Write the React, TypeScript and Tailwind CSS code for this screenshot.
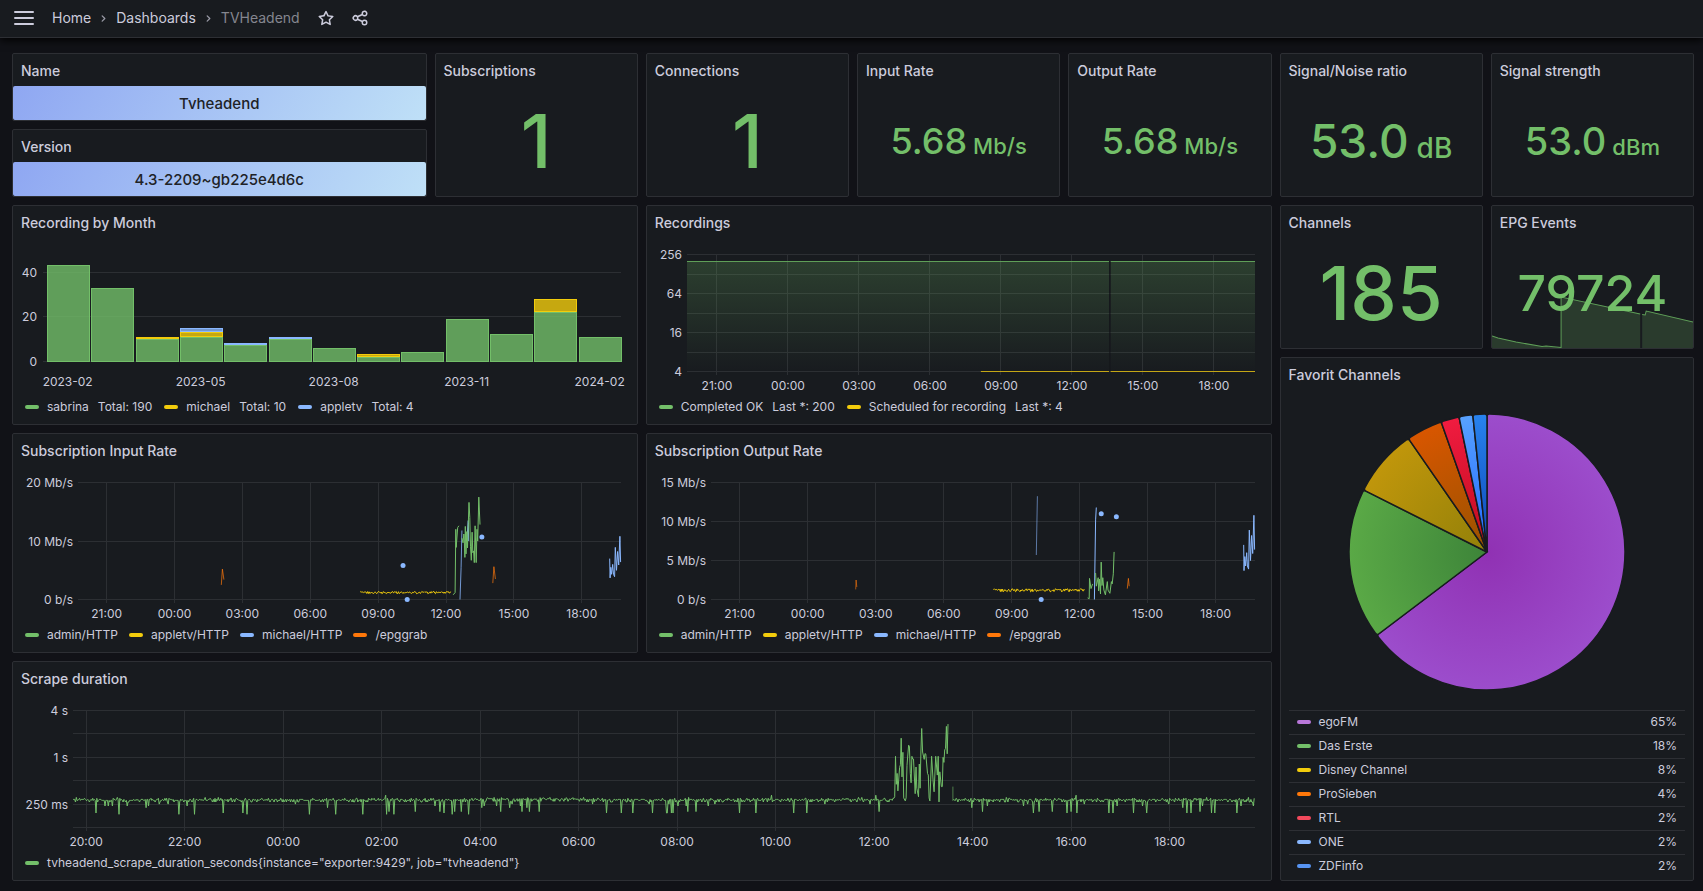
import { useLayoutEffect, useRef, useState, type ReactNode } from 'react';

const GREEN = '#73bf69';
const YELLOW = '#f2cc0c';
const BLUE = '#8ab8ff';
const ORANGE = '#ff780a';
const GRID = '#2c2f33';
const TEXT = '#ccccdc';

type Point = [number, number];

interface Series {
  color: string;
  points: Point[];
  opacity?: number;
}

const DAY = 1440;
// minute of the first full hour (20:00) inside the 24h window
const FIRST_HOUR = 16;

/* ---------- data ---------- */

const recordings = [
  { month: '2023-02', values: [43, 0, 0] },
  { month: '2023-03', values: [33, 0, 0] },
  { month: '2023-04', values: [10, 1, 0] },
  { month: '2023-05', values: [11, 2, 2] },
  { month: '2023-06', values: [7, 0, 1] },
  { month: '2023-07', values: [10, 0, 1] },
  { month: '2023-08', values: [6, 0, 0] },
  { month: '2023-09', values: [2, 1, 0] },
  { month: '2023-10', values: [4, 0, 0] },
  { month: '2023-11', values: [19, 0, 0] },
  { month: '2023-12', values: [12, 0, 0] },
  { month: '2024-01', values: [22, 6, 0] },
  { month: '2024-02', values: [11, 0, 0] },
];

const noise = (i: number) => {
  const v = Math.sin(i * 127.1 + 11.7) * 43758.5453;
  return v - Math.floor(v);
};

const range = (from: number, to: number, step: number) =>
  Array.from({ length: Math.floor((to - from) / step) + 1 }, (_, i) => from + i * step);

const appletvRate: Point[] = range(748, 988, 2).map((m) => [m, 0.98 + noise(m) * 0.4]);

const michaelTail: Point[] = [
  [1410, 7], [1411, 3.7], [1413, 5.5], [1415, 4.3], [1418, 6], [1420, 4.3], [1423, 3.9],
  [1425, 8.9], [1428, 5], [1431, 8.2], [1434, 5.9], [1437, 10.8], [1439, 6.4],
];

const inputSeries: Series[] = [
  { color: YELLOW, points: appletvRate },
  { color: BLUE, points: [[1013, 0], [1016, 5.5], [1018, 11.8]], opacity: 0.8 },
  { color: BLUE, points: [[1031, 10], [1035, 13.5], [1036, 10]] },
  { color: BLUE, points: michaelTail },
  { color: GREEN, points: [[995, 0.8], [1000, 1.2], [1002, 12], [1003, 8.9], [1007, 12.3], [1010, 12.6]] },
  {
    color: GREEN,
    points: [
      [1018, 10.5], [1021, 9.7], [1023, 11.2], [1024, 11], [1026, 7.2], [1027, 12.5], [1029, 7.8],
      [1031, 11.6], [1033, 8.8], [1035, 13], [1037, 16.6], [1039, 14], [1041, 9], [1043, 6.7],
      [1045, 11.5], [1047, 8], [1049, 8.3], [1051, 6.3], [1053, 12.6], [1056, 6.3], [1058, 12],
      [1060, 10], [1063, 17.5], [1066, 12.8],
    ],
  },
  { color: ORANGE, points: [[380, 2.5], [383, 5.2], [387, 3.4]], opacity: 0.7 },
  { color: ORANGE, points: [[1100, 2.8], [1103, 5.6], [1107, 3.5]], opacity: 0.7 },
];
const inputDots: Point[] = [[862, 5.8], [873, 0], [1071, 10.7]];

const outputSeries: Series[] = [
  { color: YELLOW, points: appletvRate },
  { color: BLUE, points: [[861, 5.7], [864, 13.25]], opacity: 0.6 },
  { color: BLUE, points: [[1015, 0], [1018, 10.2], [1020, 11.8]] },
  { color: BLUE, points: michaelTail },
  { color: GREEN, points: [[997, 0.2], [1001, 0.1], [1002, 2.7], [1006, 1.4], [1010, 2]] },
  {
    color: GREEN,
    points: [
      [1018, 3.4], [1020, 1.7], [1025, 2.8], [1026, 1.1], [1028, 2.6], [1031, 0.7], [1033, 4.8],
      [1035, 1.8], [1037, 2.8], [1040, 1.2], [1044, 0.6], [1049, 2.3], [1051, 1.2], [1056, 0.8],
      [1060, 2.3], [1062, 2], [1065, 3.3], [1067, 6.1],
    ],
  },
  { color: ORANGE, points: [[383, 1.3], [384, 2.5], [386, 1.6]], opacity: 0.6 },
  { color: ORANGE, points: [[1102, 1.4], [1105, 2.7], [1107, 1.7]], opacity: 0.7 },
];
const outputDots: Point[] = [[874, 0], [1033, 11], [1073, 10.6]];

// minutes where a scrape was noticeably faster than usual, by duration
const dips: Record<string, number[]> = {
  '0.185': [56, 129, 148, 212, 288, 320, 353, 382, 391, 462, 482],
  '0.192': [
    28, 183, 207, 452, 650, 668, 682, 706, 723, 724, 729, 731, 812, 832, 878, 894, 1170, 1211, 1223,
    1262, 1267, 1292, 1308, 1357, 1362, 1387, 1391, 1418,
  ],
  '0.2': [385, 417, 447, 465, 473, 521, 547, 556, 568, 749, 759, 982, 1108, 1177, 1193, 1216, 1373],
  '0.225': [89, 310, 498, 532, 553, 1095, 1352],
  '0.236': [39, 43, 48, 66, 92, 139, 441, 501, 516, 545, 737, 747, 774, 1114, 1158, 1272, 1303, 1376, 1423, 1438],
  '0.25': [105, 116, 271, 535, 633, 702, 726, 782, 916, 971, 1163, 1232, 1335, 1381],
};
const peaks: Record<string, number[]> = {
  '0.305': [4, 54, 161, 177, 513, 581, 622, 750, 957, 961, 1137, 1381, 1432],
  '0.325': [381, 851, 978, 1222],
};

const burst: Point[] = [
  [1001, 0.31], [1002, 1.03], [1003, 0.45], [1004, 0.62], [1005, 0.37], [1007, 0.74], [1008, 0.8],
  [1009, 1.76], [1010, 0.56], [1011, 1.16], [1012, 0.3], [1014, 0.275], [1015, 0.3], [1016, 0.79],
  [1018, 1.43], [1019, 1.39], [1020, 0.62], [1021, 0.47], [1022, 1.03], [1023, 0.95], [1024, 0.95],
  [1026, 0.34], [1027, 0.75], [1028, 0.4], [1030, 0.31], [1031, 0.82], [1032, 0.4], [1033, 1.17],
  [1034, 2.35], [1035, 1.17], [1037, 0.94], [1038, 1.12], [1039, 1.1], [1041, 0.62], [1042, 0.59],
  [1043, 0.3], [1044, 0.275], [1046, 1.03], [1048, 0.48], [1049, 0.36], [1051, 1.03], [1053, 0.59],
  [1054, 1.03], [1055, 0.267], [1056, 0.65], [1058, 0.42], [1059, 0.42], [1060, 1], [1061, 0.86],
  [1062, 1.24], [1063, 1.3], [1064, 2.5], [1065, 1.11], [1066, 2.67],
];

const overrides = new Map<number, number>();
[dips, peaks].forEach((group) =>
  Object.entries(group).forEach(([value, minutes]) => minutes.forEach((m) => overrides.set(m, Number(value)))),
);

const scrapeAt = (m: number): Point => {
  const n = noise(m);
  const base = m > 500 && m < 620 ? 0.285 : 0.279;
  const jitter = n > 0.9 ? 0.018 : n < 0.14 ? -0.013 : n > 0.55 ? 0.008 : 0;
  return [m, overrides.get(m) ?? base + jitter];
};

const scrapeSeries: Series[] = [
  { color: GREEN, points: [...range(0, 1000, 1).map(scrapeAt), ...burst] },
  { color: GREEN, points: [[1072, 0.42], [1072, 0.28]], opacity: 0.6 },
  { color: GREEN, points: range(1072, 1439, 1).map(scrapeAt) },
];

const channels = [
  { name: 'egoFM', percent: 65, swatch: 'bg-[#b877d9]', end: 232.9, inner: '#9031b3', outer: '#9c4dcc' },
  { name: 'Das Erste', percent: 18, swatch: 'bg-[#73bf69]', end: 296.7, inner: '#3d8439', outer: '#5aa946' },
  { name: 'Disney Channel', percent: 8, swatch: 'bg-[#f2cc0c]', end: 325.3, inner: '#928009', outer: '#c0960b' },
  { name: 'ProSieben', percent: 4, swatch: 'bg-[#ff780a]', end: 340.6, inner: '#985200', outer: '#d85600' },
  { name: 'RTL', percent: 2, swatch: 'bg-[#f2495c]', end: 348.3, inner: '#bf0b1d', outer: '#f01c40' },
  { name: 'ONE', percent: 2, swatch: 'bg-[#8ab8ff]', end: 354.1, inner: '#1f66ff', outer: '#58a2ff' },
  { name: 'ZDFinfo', percent: 2, swatch: 'bg-[#5794f2]', end: 360, inner: '#0d46b5', outer: '#2883ef' },
];

/* ---------- building blocks ---------- */

function Panel({ title, className, children }: { title: string; className: string; children: ReactNode }) {
  return (
    <section
      className={`relative flex min-w-0 flex-col overflow-hidden rounded-xs border border-[#2d2f34] bg-[#181b1f] ${className}`}
    >
      <h2 className="h-8 shrink-0 truncate px-2 text-sm leading-[34px] font-medium">{title}</h2>
      {children}
    </section>
  );
}

function LabelPanel({ title, value }: { title: string; value: string }) {
  return (
    <Panel title={title} className="col-span-6 row-span-2">
      <div className="flex flex-1 items-center justify-center rounded-xs bg-[linear-gradient(120deg,#8fa7f2,#bfe0f7)] pt-0.5 text-[15px] leading-5 font-medium text-[#202226]">
        {value}
      </div>
    </Panel>
  );
}

interface StatProps {
  title: string;
  value: string;
  unit?: string;
  size: string;
  unitSize?: string;
  children?: ReactNode;
}

function StatPanel({ title, value, unit, size, unitSize, children }: StatProps) {
  return (
    <Panel title={title} className="col-span-3 row-span-4">
      {children}
      <div className="relative flex flex-1 items-center justify-center font-medium text-[#73bf69]">
        <div className="flex items-baseline leading-none">
          <span className={size}>{value}</span>
          {unit && <span className={unitSize}>{unit}</span>}
        </div>
      </div>
    </Panel>
  );
}

interface LegendItem {
  label: string;
  calc?: string;
  swatch: string;
}

function Legend({ items }: { items: LegendItem[] }) {
  return (
    <ul className="flex h-5 shrink-0 items-center gap-[11px] px-1 text-xs">
      {items.map((item) => (
        <li key={item.label}>
          <button type="button" className="flex items-center gap-2 whitespace-nowrap">
            <span className={`h-1 w-3.5 rounded-full ${item.swatch}`} />
            <span>{item.label}</span>
            {item.calc && <span className="px-px">{item.calc}</span>}
          </button>
        </li>
      ))}
    </ul>
  );
}

// Tracks the rendered size so charts can draw in real pixels
function useSize() {
  const ref = useRef<HTMLDivElement>(null);
  const [size, setSize] = useState({ width: 0, height: 0 });

  useLayoutEffect(() => {
    const el = ref.current;
    if (!el) return;
    const measure = () => setSize({ width: el.clientWidth, height: el.clientHeight });
    measure();
    const observer = new ResizeObserver(measure);
    observer.observe(el);
    return () => observer.disconnect();
  }, []);

  return { ref, ...size };
}

const crisp = (v: number) => Math.floor(v) + 0.5;

interface Scale {
  x: (minute: number) => number;
  y: (fraction: number) => number;
}

interface TimeChartProps {
  label: string;
  left: number;
  hours: number;
  yTicks: (string | null)[];
  render: (scale: Scale) => ReactNode;
}

function TimeChart({ label, left, hours, yTicks, render }: TimeChartProps) {
  const { ref, width, height } = useSize();
  const right = width - 8;
  const top = 16;
  const bottom = height - 26;

  const x = (minute: number) => left + (minute / DAY) * (right - left);
  const y = (fraction: number) => bottom + 0.5 - fraction * (bottom - top);

  const firstTick = hours === 3 ? FIRST_HOUR + 60 : FIRST_HOUR;
  const firstHour = hours === 3 ? 21 : 20;
  const ticks = range(firstTick, DAY, hours * 60).map((minute, i) => ({
    minute,
    label: `${String((firstHour + i * hours) % 24).padStart(2, '0')}:00`,
  }));

  return (
    <div ref={ref} className="min-h-0 flex-1 overflow-hidden">
      {width > 0 && (
        <svg width={width} height={height} className="block text-xs" role="img" aria-label={label}>
          {ticks.map((t) => (
            <g key={t.label}>
              <path d={`M${crisp(x(t.minute))},${top}V${bottom + 4}`} stroke={GRID} />
              <text x={x(t.minute)} y={bottom + 19} textAnchor="middle" fill={TEXT}>
                {t.label}
              </text>
            </g>
          ))}
          {yTicks.map((tick, i) => {
            const ty = crisp(y(i / (yTicks.length - 1)));
            return (
              <g key={i}>
                <path d={`M${left},${ty}H${right}`} stroke={GRID} />
                {tick && (
                  <text x={left - 5} y={ty + 4} textAnchor="end" fill={TEXT}>
                    {tick}
                  </text>
                )}
              </g>
            );
          })}
          {render({ x, y })}
        </svg>
      )}
    </div>
  );
}

function Lines({ series, toFraction, scale }: { series: Series[]; toFraction: (v: number) => number; scale: Scale }) {
  return (
    <>
      {series.map((s, i) => {
        const d = s.points.map(([m, v]) => `${scale.x(m).toFixed(1)},${scale.y(toFraction(v)).toFixed(1)}`).join('L');
        return <path key={i} d={`M${d}`} fill="none" stroke={s.color} strokeOpacity={s.opacity} />;
      })}
    </>
  );
}

/* ---------- panels ---------- */

function MonthChart() {
  const { ref, width, height } = useSize();
  const left = 22;
  const right = width - 8;
  const zero = height - 36;
  const perUnit = 2.225;
  const step = (right - left - 2) / recordings.length;
  const colors = [GREEN, YELLOW, BLUE];

  return (
    <div ref={ref} className="min-h-0 flex-1 overflow-hidden">
      {width > 0 && (
        <svg width={width} height={height} className="block text-xs" role="img" aria-label="Recording by Month">
          {[0, 20, 40].map((v) => {
            const y = crisp(zero - v * perUnit);
            return (
              <g key={v}>
                <path d={`M${left},${y}H${right}`} stroke={GRID} />
                <text x={left - 6} y={y + 4} textAnchor="end" fill={TEXT}>
                  {v}
                </text>
              </g>
            );
          })}
          {recordings.map((r, i) => {
            const x = Math.round(left + 4 + i * step) + 0.5;
            let total = 0;
            return (
              <g key={r.month}>
                {r.values.map((v, s) => {
                  if (!v) return null;
                  const from = Math.round(zero - total * perUnit);
                  total += v;
                  const to = Math.round(zero - total * perUnit);
                  return (
                    <rect
                      key={s}
                      x={x}
                      y={to + 0.5}
                      width={Math.round(step) - 2}
                      height={Math.max(from - to - (s === 0 ? 0 : 1), 1)}
                      fill={colors[s]}
                      fillOpacity={0.8}
                      stroke={colors[s]}
                    />
                  );
                })}
                {i % 3 === 0 && (
                  <text x={x + step / 2 - 2} y={height - 11} textAnchor="middle" fill={TEXT}>
                    {r.month}
                  </text>
                )}
              </g>
            );
          })}
        </svg>
      )}
    </div>
  );
}

function RecordingsChart() {
  const gapStart = 1070;
  const gapEnd = 1074;
  return (
    <TimeChart
      label="Recordings"
      left={32}
      hours={3}
      yTicks={['4', null, '16', null, '64', null, '256']}
      render={({ x, y }) => {
        const top = crisp(y(Math.log2(200 / 4) / 6));
        const bottom = y(0);
        return (
          <>
            <defs>
              <linearGradient id="completed-fill" x1="0" y1="0" x2="0" y2="1">
                <stop offset="0" stopColor={GREEN} stopOpacity={0.22} />
                <stop offset="1" stopColor={GREEN} stopOpacity={0} />
              </linearGradient>
            </defs>
            {[
              [0, gapStart],
              [gapEnd, DAY],
            ].map(([from, to]) => (
              <g key={from}>
                <rect x={x(from)} y={top} width={x(to) - x(from)} height={bottom - top} fill="url(#completed-fill)" />
                <path d={`M${x(from)},${top}H${x(to)}`} stroke="#5f9f58" />
              </g>
            ))}
            <path d={`M${x(gapStart + 2)},${top}V${bottom}`} stroke="#15171b" />
            <path d={`M${x(745)},${bottom}H${x(gapStart)}M${x(gapEnd)},${bottom}H${x(DAY)}`} stroke="#c4a615" />
          </>
        );
      }}
    />
  );
}

function RateChart({ label, left, max, yTicks, series, dots }: {
  label: string;
  left: number;
  max: number;
  yTicks: string[];
  series: Series[];
  dots: Point[];
}) {
  return (
    <TimeChart
      label={label}
      left={left}
      hours={3}
      yTicks={yTicks}
      render={(scale) => (
        <>
          <Lines series={series} toFraction={(v) => v / max} scale={scale} />
          {dots.map(([m, v]) => (
            <circle key={m} cx={scale.x(m)} cy={scale.y(v / max)} r={2.5} fill={BLUE} />
          ))}
        </>
      )}
    />
  );
}

const rateLegend: LegendItem[] = [
  { label: 'admin/HTTP', swatch: 'bg-[#73bf69]' },
  { label: 'appletv/HTTP', swatch: 'bg-[#f2cc0c]' },
  { label: 'michael/HTTP', swatch: 'bg-[#8ab8ff]' },
  { label: '/epggrab', swatch: 'bg-[#ff780a]' },
];

function ScrapeChart() {
  return (
    <TimeChart
      label="Scrape duration"
      left={52}
      hours={2}
      yTicks={[null, '250 ms', null, '1 s', null, '4 s']}
      render={(scale) => (
        <Lines series={scrapeSeries} toFraction={(seconds) => Math.log2(seconds / 0.125) / 5} scale={scale} />
      )}
    />
  );
}

function EpgSparkline() {
  return (
    <svg viewBox="0 0 201 52" preserveAspectRatio="none" className="absolute inset-x-0 bottom-0 h-[52px] w-full" aria-hidden="true">
      <path
        d="M0,40L6,42 24,46 50,50.5 54,50 69,52V1L148,18V52H0Z M150,52V18.5L153,19 154,15 201,26V52Z"
        fill={GREEN}
        fillOpacity={0.2}
      />
      <path
        d="M0,40L6,42 24,46 50,50.5 54,50 69,51.5V1L148,18 M150,18.5L153,19 154,15 201,26"
        fill="none"
        stroke="#5f9f58"
        vectorEffect="non-scaling-stroke"
      />
    </svg>
  );
}

const PIE_RADIUS = 138;
const CORNER = 2.5;

const polar = (degrees: number, radius: number) => {
  const a = ((degrees - 90) * Math.PI) / 180;
  return `${(Math.cos(a) * radius).toFixed(2)},${(Math.sin(a) * radius).toFixed(2)}`;
};

// Pie slice with slightly rounded outer corners
const slicePath = (start: number, end: number) => {
  const cut = (CORNER / PIE_RADIUS) * (180 / Math.PI);
  const inner = PIE_RADIUS - CORNER;
  const large = end - start > 180 ? 1 : 0;
  return [
    `M0,0L${polar(start, inner)}`,
    `Q${polar(start, PIE_RADIUS)} ${polar(start + cut, PIE_RADIUS)}`,
    `A${PIE_RADIUS},${PIE_RADIUS} 0 ${large} 1 ${polar(end - cut, PIE_RADIUS)}`,
    `Q${polar(end, PIE_RADIUS)} ${polar(end, inner)}Z`,
  ].join('');
};

function FavoritChannels() {
  return (
    <>
      <div className="flex min-h-0 flex-1 items-center justify-center pt-1">
        <svg viewBox="-140 -140 280 280" className="w-[280px] max-w-full" role="img" aria-label="Favorit Channels">
          <defs>
            {channels.map((c) => (
              <radialGradient key={c.name} id={`slice-${c.percent}-${c.end}`} gradientUnits="userSpaceOnUse" cx="0" cy="0" r={PIE_RADIUS}>
                <stop offset="0" stopColor={c.inner} />
                <stop offset="1" stopColor={c.outer} />
              </radialGradient>
            ))}
          </defs>
          {channels.map((c, i) => (
            <path
              key={c.name}
              d={slicePath(i === 0 ? 0 : channels[i - 1].end, c.end)}
              fill={`url(#slice-${c.percent}-${c.end})`}
              stroke="#181b1f"
              strokeWidth={1.5}
            />
          ))}
        </svg>
      </div>
      <div className="px-2 pb-0.5">
        <table className="w-full text-xs">
          <tbody>
            {channels.map((c) => (
              <tr key={c.name} className="h-6 border-t border-[#2d2f34]">
                <th scope="row" className="py-0 pl-2 text-left font-normal">
                  <button type="button" className="flex items-center gap-2">
                    <span className={`h-1 w-3.5 rounded-full ${c.swatch}`} />
                    {c.name}
                  </button>
                </th>
                <td className="py-0 pr-2 text-right">{c.percent}%</td>
              </tr>
            ))}
          </tbody>
        </table>
      </div>
    </>
  );
}

function Icon({ path, className }: { path: string; className: string }) {
  return (
    <svg viewBox="0 0 24 24" fill="currentColor" className={className} aria-hidden="true">
      <path d={path} />
    </svg>
  );
}

const ANGLE_RIGHT =
  'M14.83,11.29,10.59,7.05a1,1,0,0,0-1.42,0,1,1,0,0,0,0,1.41L12.71,12,9.17,15.54a1,1,0,0,0,0,1.41,1,1,0,0,0,.71.29,1,1,0,0,0,.71-.29l4.24-4.24A1,1,0,0,0,14.83,11.29Z';
const STAR =
  'M22,9.67A1,1,0,0,0,21.14,9l-5.69-.83L12.9,3a1,1,0,0,0-1.8,0L8.55,8.16,2.86,9a1,1,0,0,0-.81.68,1,1,0,0,0,.25,1l4.13,4-1,5.68A1,1,0,0,0,6.9,21.44L12,18.77l5.1,2.67a.93.93,0,0,0,.46.12,1,1,0,0,0,.59-.19,1,1,0,0,0,.4-1l-1-5.68,4.13-4A1,1,0,0,0,22,9.67Zm-6.15,4a1,1,0,0,0-.29.88l.72,4.2-3.76-2a1.06,1.06,0,0,0-.94,0l-3.76,2,.72-4.2a1,1,0,0,0-.29-.88l-3-3,4.21-.61a1,1,0,0,0,.76-.55L12,5.7l1.88,3.82a1,1,0,0,0,.76.55l4.21.61Z';
const SHARE =
  'M18,14a4,4,0,0,0-3.08,1.48l-5.1-2.35a3.64,3.64,0,0,0,0-2.26l5.1-2.35A4,4,0,1,0,14,6a4.17,4.17,0,0,0,.07.71L8.79,9.14a4,4,0,1,0,0,5.72l5.28,2.43A4.17,4.17,0,0,0,14,18a4,4,0,1,0,4-4ZM18,4a2,2,0,1,1-2,2A2,2,0,0,1,18,4ZM6,14a2,2,0,1,1,2-2A2,2,0,0,1,6,14Zm12,6a2,2,0,1,1,2-2A2,2,0,0,1,18,20Z';

function TopBar() {
  return (
    <header className="relative flex h-[38px] items-center border-b border-[#2d2f34] bg-[#181b1f] px-3.5 pb-0.5 text-sm shadow-[0_2px_8px_#000000]">
      <button type="button" aria-label="Open menu" className="flex w-5 flex-col gap-1">
        <span className="h-0.5 rounded-full bg-[#ccccdc]" />
        <span className="h-0.5 rounded-full bg-[#ccccdc]" />
        <span className="h-0.5 rounded-full bg-[#ccccdc]" />
      </button>
      <nav aria-label="Breadcrumbs" className="ml-[18px]">
        <ol className="flex items-center">
          <li>
            <a href="#home">Home</a>
          </li>
          <li className="px-[5px] pt-0.5 text-[#9a9ba7]">
            <Icon path={ANGLE_RIGHT} className="size-[15px]" />
          </li>
          <li>
            <a href="#dashboards">Dashboards</a>
          </li>
          <li className="px-[5px] pt-0.5 text-[#9a9ba7]">
            <Icon path={ANGLE_RIGHT} className="size-[15px]" />
          </li>
          <li className="text-[#85868f]" aria-current="page">
            TVHeadend
          </li>
        </ol>
      </nav>
      <button type="button" aria-label="Mark as favorite" className="ml-[17px]">
        <Icon path={STAR} className="size-[18px]" />
      </button>
      <button type="button" aria-label="Share dashboard" className="ml-4">
        <Icon path={SHARE} className="size-[18px]" />
      </button>
    </header>
  );
}

export default function App() {
  return (
    <div className="min-h-screen bg-[#111217] font-[Inter,sans-serif] text-[#ccccdc]">
      <TopBar />
      <main className="grid auto-rows-[30px] grid-cols-24 gap-2 pt-[15px] pr-[9px] pl-3">
        <LabelPanel title="Name" value="Tvheadend" />
        <StatPanel title="Subscriptions" value="1" size="text-[74px]" />
        <StatPanel title="Connections" value="1" size="text-[74px]" />
        <StatPanel title="Input Rate" value="5.68" unit="Mb/s" size="text-4xl" unitSize="ml-1.5 text-[22px]" />
        <StatPanel title="Output Rate" value="5.68" unit="Mb/s" size="text-4xl" unitSize="ml-1.5 text-[22px]" />
        <StatPanel title="Signal/Noise ratio" value="53.0" unit="dB" size="text-[46px]" unitSize="ml-2 text-[28px]" />
        <StatPanel title="Signal strength" value="53.0" unit="dBm" size="text-[38px]" unitSize="ml-1.5 text-[22px]" />
        <LabelPanel title="Version" value="4.3-2209~gb225e4d6c" />

        <Panel title="Recording by Month" className="col-span-9 row-span-6">
          <div className="flex min-h-0 flex-1 flex-col px-2 pb-[7px]">
            <MonthChart />
            <Legend
              items={[
                { label: 'sabrina', calc: 'Total: 190', swatch: 'bg-[#73bf69]' },
                { label: 'michael', calc: 'Total: 10', swatch: 'bg-[#f2cc0c]' },
                { label: 'appletv', calc: 'Total: 4', swatch: 'bg-[#8ab8ff]' },
              ]}
            />
          </div>
        </Panel>
        <Panel title="Recordings" className="col-span-9 row-span-6">
          <div className="flex min-h-0 flex-1 flex-col px-2 pb-[7px]">
            <RecordingsChart />
            <Legend
              items={[
                { label: 'Completed OK', calc: 'Last *: 200', swatch: 'bg-[#73bf69]' },
                { label: 'Scheduled for recording', calc: 'Last *: 4', swatch: 'bg-[#f2cc0c]' },
              ]}
            />
          </div>
        </Panel>
        <StatPanel title="Channels" value="185" size="text-[74px]" />
        <StatPanel title="EPG Events" value="79724" size="text-[50px]">
          <EpgSparkline />
        </StatPanel>

        <Panel title="Favorit Channels" className="col-span-6 row-span-14">
          <FavoritChannels />
        </Panel>

        <Panel title="Subscription Input Rate" className="col-span-9 row-span-6">
          <div className="flex min-h-0 flex-1 flex-col px-2 pb-[7px]">
            <RateChart
              label="Subscription Input Rate"
              left={57}
              max={20}
              yTicks={['0 b/s', '10 Mb/s', '20 Mb/s']}
              series={inputSeries}
              dots={inputDots}
            />
            <Legend items={rateLegend} />
          </div>
        </Panel>
        <Panel title="Subscription Output Rate" className="col-span-9 row-span-6">
          <div className="flex min-h-0 flex-1 flex-col px-2 pb-[7px]">
            <RateChart
              label="Subscription Output Rate"
              left={56}
              max={15}
              yTicks={['0 b/s', '5 Mb/s', '10 Mb/s', '15 Mb/s']}
              series={outputSeries}
              dots={outputDots}
            />
            <Legend items={rateLegend} />
          </div>
        </Panel>

        <Panel title="Scrape duration" className="col-span-18 row-span-6">
          <div className="flex min-h-0 flex-1 flex-col px-2 pb-[7px]">
            <ScrapeChart />
            <Legend
              items={[
                {
                  label: 'tvheadend_scrape_duration_seconds{instance="exporter:9429", job="tvheadend"}',
                  swatch: 'bg-[#73bf69]',
                },
              ]}
            />
          </div>
        </Panel>
      </main>
    </div>
  );
}
